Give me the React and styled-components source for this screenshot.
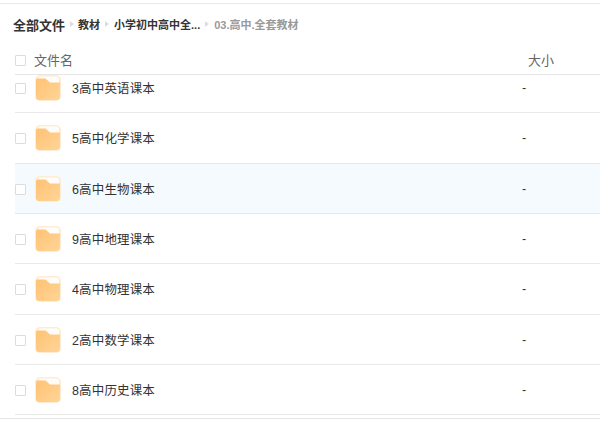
import styled, { createGlobalStyle } from "styled-components"

const GlobalStyle = createGlobalStyle`
  html, body {
    margin: 0;
    padding: 0;
    background: #fff;
  }
  body {
    font-family: "Liberation Sans", "Noto Sans CJK SC", sans-serif;
    overflow: hidden;
  }
`

const Page = styled.div`
  width: 600px;
  height: 424px;
  display: flex;
  flex-direction: column;
  padding-top: 3px;
  box-sizing: border-box;
  overflow: hidden;
`

const Breadcrumb = styled.nav`
  height: 41px;
  flex: none;
  display: flex;
  align-items: center;
  padding-left: 13px;
  border-top: 1px solid #e9e9e9;
  box-sizing: border-box;
`

const Crumb = styled.span`
  font-size: ${(p) => (p.$root ? 13 : 11)}px;
  font-weight: 700;
  color: ${(p) => (p.$current ? "#999" : "#333")};
`

const Arrow = styled.span`
  width: 0;
  height: 0;
  margin: 0 ${(p) => p.$gap || 6}px;
  border-left: 4px solid #ddd;
  border-top: 3.5px solid transparent;
  border-bottom: 3.5px solid transparent;
`

const TableHead = styled.div`
  height: 30px;
  flex: none;
  display: flex;
  align-items: center;
  margin-left: 15px;
  border-bottom: 1px solid #e6e6e6;
  box-sizing: content-box;
`

const HeadName = styled.span`
  margin-left: 8px;
  width: 494px;
  font-size: 13px;
  color: #666;
`

const HeadSize = styled.span`
  font-size: 13px;
  color: #666;
`

const Check = styled.span`
  flex: none;
  width: 9px;
  height: 9px;
  margin-top: 2px;
  border: 1px solid #dcdcdc;
  border-radius: 1px;
  background: #fff;
`

const ListFrame = styled.div`
  flex: none;
  height: 343px;
  overflow: hidden;
  border-bottom: 1px solid #e6e6e6;
`

const List = styled.ul`
  list-style: none;
  margin: -12.2px 0 0 15px;
  padding: 0;
`

const Row = styled.li`
  height: 49.35px;
  display: flex;
  align-items: center;
  border-bottom: 1px solid #e9e9e9;
  background: ${(p) => (p.$active ? "#f5faff" : "#fff")};
`

const FolderBox = styled.svg`
  flex: none;
  margin: 1px 0 0 9px;
  width: 26px;
  height: 26px;
`

const Name = styled.span`
  margin-left: 11px;
  width: 450px;
  font-size: 12.5px;
  letter-spacing: 0.15px;
  color: #333;
`

const Size = styled.span`
  margin-top: 1px;
  font-size: 12.5px;
  color: #333;
`

const FolderIcon = ({ id }) => (
  <FolderBox viewBox="0 0 26 26">
    <defs>
      <linearGradient id={id} x1="0" y1="0" x2="1" y2="1">
        <stop offset="0" stopColor="#ffc273" />
        <stop offset="1" stopColor="#ffd598" />
      </linearGradient>
    </defs>
    <rect x="0" y="0" width="26" height="26" rx="5" fill="#ffecd2" />
    <path d="M4 1.5h17a3 3 0 0 1 3 3V8H4z" fill="#fffdf9" />
    <path
      d="M1 5.5a2 2 0 0 1 2-2h7.5L15 7.5h10V22a3 3 0 0 1-3 3H4a3 3 0 0 1-3-3z"
      fill={`url(#${id})`}
    />
  </FolderBox>
)

const folders = [
  "3高中英语课本",
  "5高中化学课本",
  "6高中生物课本",
  "9高中地理课本",
  "4高中物理课本",
  "2高中数学课本",
  "8高中历史课本",
]

const App = () => {
  return (
    <Page>
      <GlobalStyle />
      <Breadcrumb>
        <Crumb $root>全部文件</Crumb>
        <Arrow $gap={4.5} />
        <Crumb>教材</Crumb>
        <Arrow $gap={5} />
        <Crumb>小学初中高中全...</Crumb>
        <Arrow $gap={5} />
        <Crumb $current>03.高中.全套教材</Crumb>
      </Breadcrumb>
      <TableHead>
        <Check />
        <HeadName>文件名</HeadName>
        <HeadSize>大小</HeadSize>
      </TableHead>
      <ListFrame>
        <List>
          {folders.map((name, i) => (
            <Row key={name} $active={i === 2}>
              <Check />
              <FolderIcon id={`folder-fill-${i}`} />
              <Name>{name}</Name>
              <Size>-</Size>
            </Row>
          ))}
        </List>
      </ListFrame>
    </Page>
  )
}

export default App
